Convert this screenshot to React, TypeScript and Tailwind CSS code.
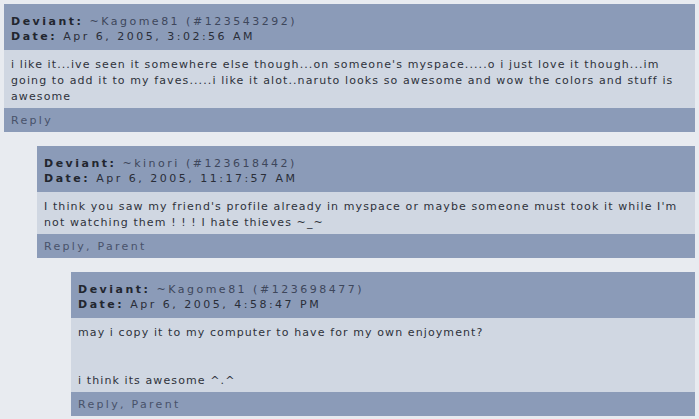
type Comment = {
  user: string
  id: string
  date: string
  body: string[]
  links: string
  depth: number
}

const comments: Comment[] = [
  {
    user: '~Kagome81',
    id: '#123543292',
    date: 'Apr 6, 2005, 3:02:56 AM',
    body: [
      "i like it...ive seen it somewhere else though...on someone's myspace.....o i just love it though...im going to add it to my faves.....i like it alot..naruto looks so awesome and wow the colors and stuff is awesome",
    ],
    links: 'Reply',
    depth: 0,
  },
  {
    user: '~kinori',
    id: '#123618442',
    date: 'Apr 6, 2005, 11:17:57 AM',
    body: ["I think you saw my friend's profile already in myspace or maybe someone must took it while I'm not watching them ! ! ! I hate thieves ~_~"],
    links: 'Reply, Parent',
    depth: 1,
  },
  {
    user: '~Kagome81',
    id: '#123698477',
    date: 'Apr 6, 2005, 4:58:47 PM',
    body: ['may i copy it to my computer to have for my own enjoyment?', '', '', 'i think its awesome ^.^'],
    links: 'Reply, Parent',
    depth: 2,
  },
]

const indent = ['ml-0', 'ml-[33px]', 'ml-[67px]']

function CommentBox({ c }: { c: Comment }) {
  return (
    <div className={`${indent[c.depth]} flex flex-col`}>
      <div className="bg-[#8b9bb8] px-[7px] pt-[10px] pb-[6px] text-[11px] leading-[15px] tracking-[2.5px] text-[#2a2e38]">
        <div>
          <span className="font-bold text-[#22262f]">Deviant:</span>{' '}
          <span className="text-[#3e475c]">
            {c.user} ({c.id})
          </span>
        </div>
        <div>
          <span className="font-bold text-[#22262f]">Date:</span> {c.date}
        </div>
      </div>
      <div className="bg-[#d0d7e2] px-[7px] pt-[7px] pb-[3px] text-[11px] leading-[16px] tracking-[1.1px] text-[#2e323b]">
        {c.body.map((line, i) => (
          <div key={i}>{line === '' ? '\u00a0' : line}</div>
        ))}
      </div>
      <div className="bg-[#8b9bb8] px-[7px] pt-[5px] pb-[3px] text-[11px] leading-[16px] tracking-[2.3px] text-[#48526a]">
        {c.links}
      </div>
    </div>
  )
}

export default function App() {
  return (
    <div
      className="min-h-[419px] w-[699px] bg-[#e8ebf0] pl-[4px] pr-[4px] pt-[4px] flex flex-col gap-[14px]"
      style={{ fontFamily: '"DejaVu Sans", Verdana, sans-serif' }}
    >
      {comments.map((c, i) => (
        <CommentBox key={i} c={c} />
      ))}
    </div>
  )
}
